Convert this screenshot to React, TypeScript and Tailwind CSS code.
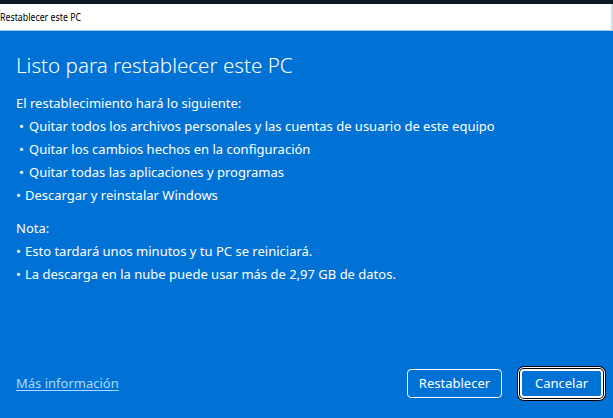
const font = { fontFamily: '"Segoe UI", "Noto Sans", "Open Sans", sans-serif' };

const changes = [
  { text: "Quitar todos los archivos personales y las cuentas de usuario de este equipo", wide: true },
  { text: "Quitar los cambios hechos en la configuración", wide: true },
  { text: "Quitar todas las aplicaciones y programas", wide: true },
  { text: "Descargar y reinstalar Windows", wide: false },
];

const notes = [
  "Esto tardará unos minutos y tu PC se reiniciará.",
  "La descarga en la nube puede usar más de 2,97 GB de datos.",
];

function Bullet({ text, wide }: { text: string; wide?: boolean }) {
  return (
    <div className="flex h-[23px] items-center">
      <span className={wide ? "w-[13px] pl-[3px]" : "w-[9px]"}>•</span>
      <span>{text}</span>
    </div>
  );
}

export default function App() {
  return (
    <div
      className="flex h-[418px] w-[613px] flex-col overflow-hidden bg-[#0172d5] text-white antialiased"
      style={font}
    >
      <div className="h-[4px] bg-[#0d1a23]" />
      <div className="flex h-[27px] items-center border-b border-r-2 border-[#9cc8ee] border-r-[#d9dde0] bg-white text-[11px] text-black">
        <span className="origin-left scale-x-[0.8]">Restablecer este PC</span>
      </div>

      <div className="flex flex-1 flex-col px-4 pt-[20px]">
        <h1 className="text-[20.6px] font-light leading-[28px]">Listo para restablecer este PC</h1>

        <div className="mt-[13px] text-[13px]">
          <div className="flex h-[23px] items-center">El restablecimiento hará lo siguiente:</div>
          {changes.map((c) => (
            <Bullet key={c.text} text={c.text} wide={c.wide} />
          ))}
        </div>

        <div className="mt-[10px] text-[13px]">
          <div className="flex h-[23px] items-center">Nota:</div>
          {notes.map((n) => (
            <Bullet key={n} text={n} />
          ))}
        </div>
      </div>

      <div className="flex items-center justify-between pb-[20px] pl-4 pr-[10px]">
        <a href="#" className="text-[13px] text-[#a8dbff] underline underline-offset-2">
          Más información
        </a>
        <div className="flex items-center gap-[18px]">
          <button
            type="button"
            className="h-[29px] w-[95px] rounded-[4px] border border-white bg-[#0172d5] text-[13px] text-white"
          >
            Restablecer
          </button>
          <button
            type="button"
            className="h-[29px] w-[83px] rounded-[4px] border-2 border-white bg-[#0172d5] text-[13px] text-white shadow-[0_0_0_1px_#000,0_0_0_2px_#fff,0_0_0_3px_#000]"
          >
            Cancelar
          </button>
        </div>
      </div>
    </div>
  );
}
